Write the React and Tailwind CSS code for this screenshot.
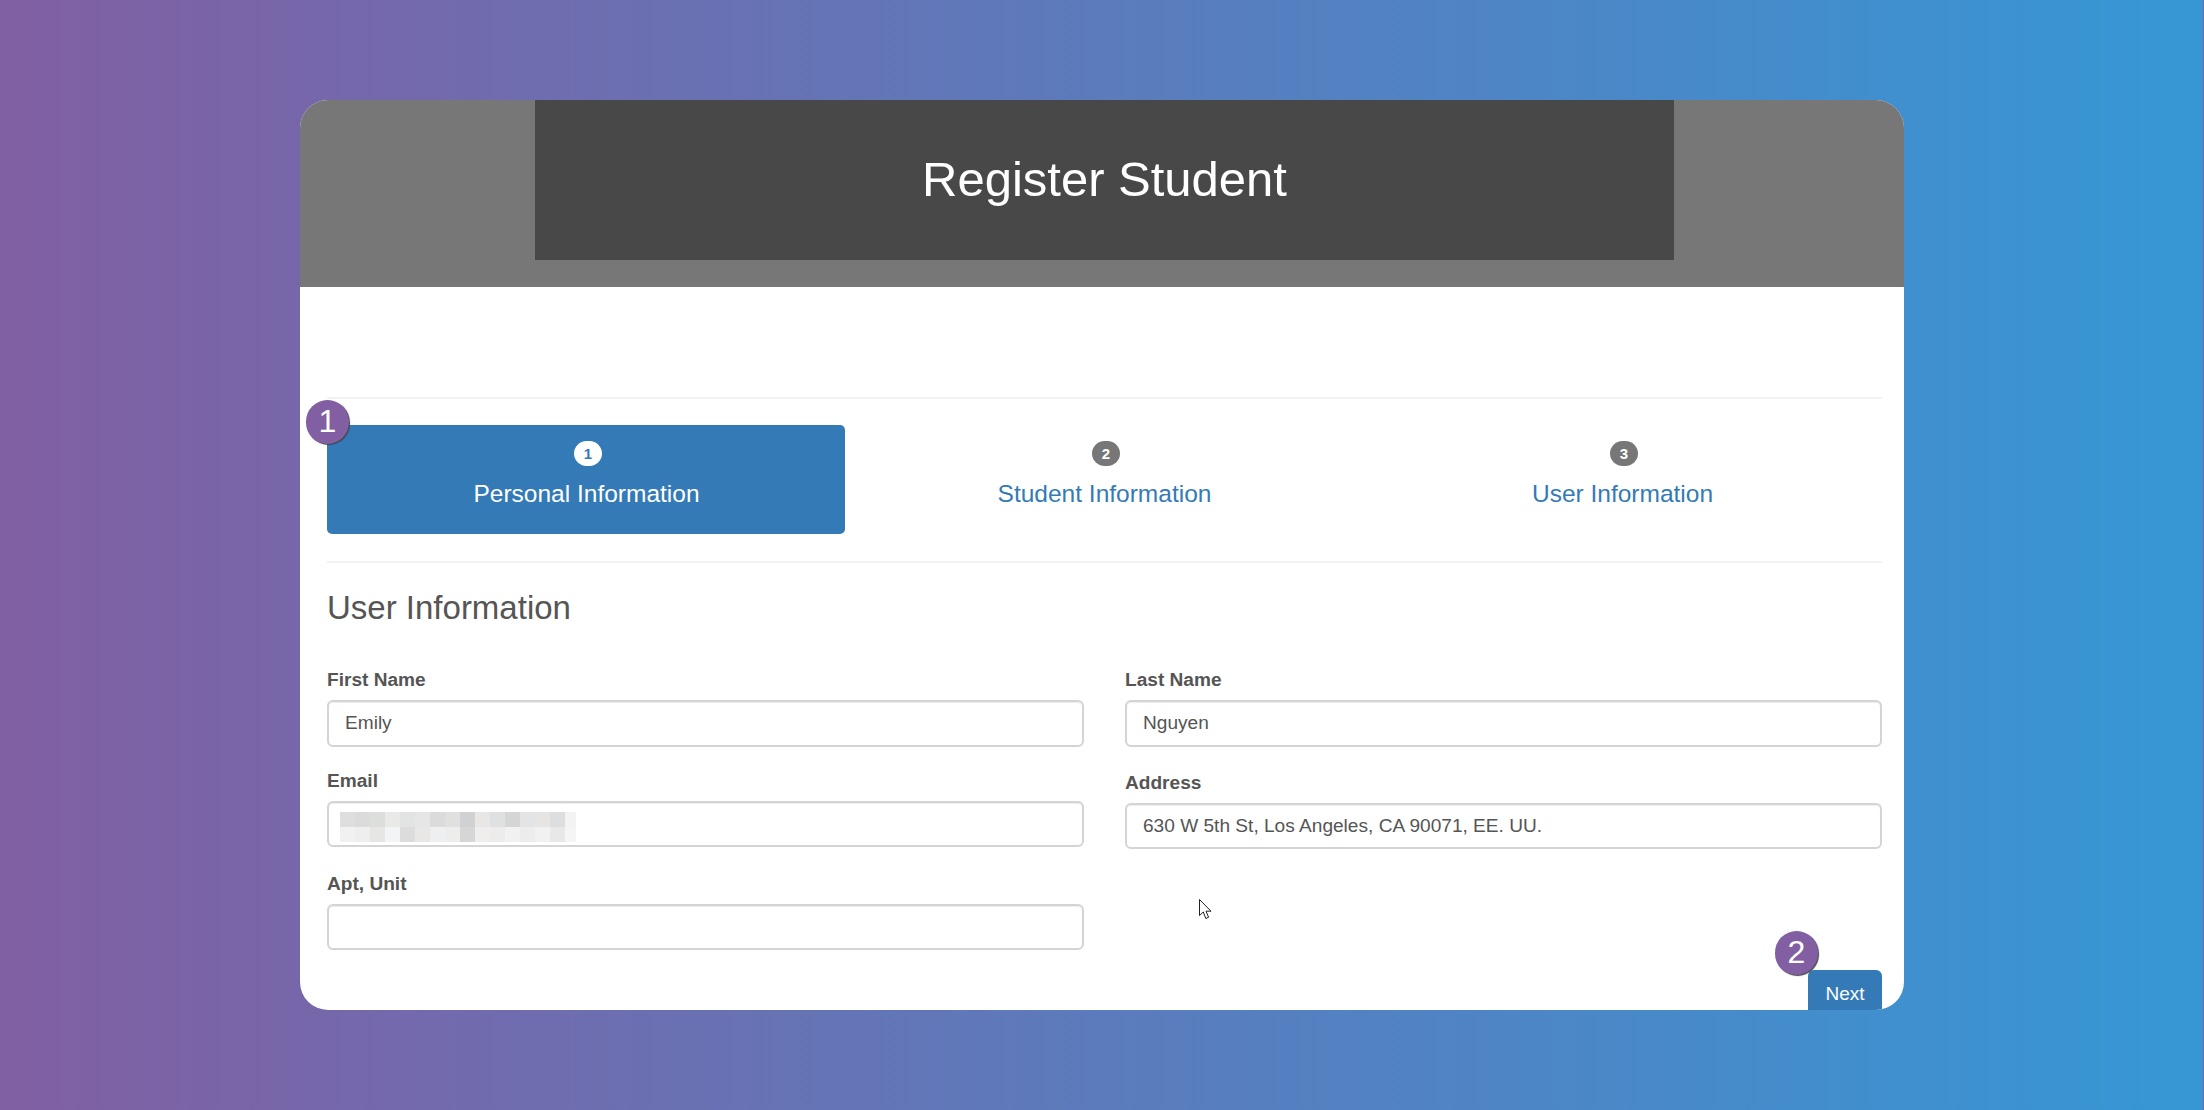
const blurTop = [
  "bg-[#dedede]", "bg-[#dadbda]", "bg-[#dcdedc]", "bg-[#e9e9e7]", "bg-[#e2e4e3]", "bg-[#e6e6e6]", "bg-[#dbdbdc]", "bg-[#e0e0de]",
  "bg-[#d0d1d2]", "bg-[#e8e7e5]", "bg-[#dfe0e2]", "bg-[#d5d5d5]", "bg-[#e3e4e6]", "bg-[#e7e5e3]", "bg-[#dddee0]", "bg-[#f3f3f3]",
]
const blurBottom = [
  "bg-[#f1f1f1]", "bg-[#eeeeee]", "bg-[#e6e6e3]", "bg-[#f3f4f5]", "bg-[#dcdcdc]", "bg-[#e8e7e5]", "bg-[#eeeff1]", "bg-[#ededeb]",
  "bg-[#d6d6d6]", "bg-[#efeeec]", "bg-[#ececec]", "bg-[#f1f1f1]", "bg-[#ececed]", "bg-[#f1f1ef]", "bg-[#e8e8e8]", "bg-[#f5f5f5]",
]

const Badge = ({ children, className }) => (
  <span
    className={
      "absolute z-10 w-[43px] h-[44px] rounded-full bg-[#825ea3] text-white text-[32px] leading-[42px] text-center shadow-[1px_1px_1px_#444] " +
      className
    }
  >
    {children}
  </span>
)

const Step = ({ num, title, active, badge }) => (
  <div
    className={
      "relative w-[518px] h-[109px] rounded-[5px] flex flex-col items-center pt-[16px] " +
      (active ? "bg-[#337ab7] text-white" : "text-[#337ab7]")
    }
  >
    {badge}
    <span
      className={
        "ml-[4px] w-[28px] h-[25px] rounded-full text-[15px] leading-[25px] font-bold text-center " +
        (active ? "bg-white text-[#337ab7]" : "bg-[#777777] text-white")
      }
    >
      {num}
    </span>
    <span className="ml-[1px] mt-[13px] text-[24.5px] leading-[29px]">{title}</span>
  </div>
)

const Field = ({ label, value, className, children, inputHeight = "h-[46px]" }) => (
  <div className={"flex flex-col " + className}>
    <label className="h-[21px] text-[19.1px] leading-[21px] font-bold text-[#555555] mb-[10px]">{label}</label>
    <div
      className={
        "relative rounded-[6px] border-2 border-[#d4d4d4] bg-white shadow-[inset_0_1px_1px_rgba(0,0,0,0.075)] px-[16px] flex items-center text-[19.1px] text-[#555555] " +
        inputHeight
      }
    >
      {value}
      {children}
    </div>
  </div>
)

const App = () => {
  return (
    <div className="relative h-[1110px] bg-[linear-gradient(to_right,#815fa3,#3697d5)] bg-[length:2203px_100%] pt-[100px] pl-[300px] font-['Liberation_Sans',Arial,sans-serif] overflow-hidden">
      <div className="w-[1604px] h-[910px] bg-white rounded-[28px] overflow-hidden">
        <div className="h-[187px] bg-[#777777] flex justify-center pl-[5px]">
          <div className="w-[1139px] h-[160px] bg-[#484848] flex items-center justify-center">
            <h1 className="text-[49px] leading-none text-white pb-[2px]">Register Student</h1>
          </div>
        </div>

        <div className="pl-[27px] pr-[22px]">
          <hr className="mt-[110px] border-t-2 border-[#f2f2f2]" />

          <div className="flex mt-[26px]">
            <Step num="1" title="Personal Information" active badge={<Badge className="-left-[21px] -top-[25px]">1</Badge>} />
            <Step num="2" title="Student Information" />
            <Step num="3" title="User Information" />
          </div>

          <hr className="mt-[27px] border-t-2 border-[#f2f2f2]" />

          <h3 className="mt-[26px] text-[33px] leading-[38px] text-[#555555]">User Information</h3>

          <div className="grid grid-cols-2 gap-x-[41px] mt-[42px]">
            <div className="flex flex-col">
              <Field label="First Name" value="Emily" inputHeight="h-[47px]" />
              <Field label="Email" className="mt-[23px]">
                <div className="absolute left-[11px] top-[9px] flex flex-col">
                  <div className="flex">
                    {blurTop.map((c, i) => (
                      <div key={i} className={"h-[15px] " + (i === 15 ? "w-[11px] " : "w-[15px] ") + c} />
                    ))}
                  </div>
                  <div className="flex">
                    {blurBottom.map((c, i) => (
                      <div key={i} className={"h-[15px] " + (i === 15 ? "w-[11px] " : "w-[15px] ") + c} />
                    ))}
                  </div>
                </div>
              </Field>
              <Field label="Apt, Unit" className="mt-[26px]" />
            </div>
            <div className="flex flex-col">
              <Field label="Last Name" value="Nguyen" inputHeight="h-[47px]" />
              <Field label="Address" value="630 W 5th St, Los Angeles, CA 90071, EE. UU." className="mt-[25px]" />
            </div>
          </div>

          <div className="flex justify-end mt-[20px]">
            <button className="relative w-[74px] h-[50px] rounded-t-[6px] bg-[#337ab7] text-white text-[19px] pb-[1px]">
              <Badge className="-left-[33px] -top-[39px] leading-[39px]">2</Badge>
              Next
            </button>
          </div>
        </div>
      </div>

      <svg className="absolute left-[1199px] top-[899px]" width="13" height="21" viewBox="0 0 13 21">
        <path d="M0.5 0.5V16.5L4.3 13L6.8 19.5L9.6 18.3L7 12.2H12Z" fill="white" stroke="#222222" strokeWidth="1" />
      </svg>
    </div>
  )
}

export default App
